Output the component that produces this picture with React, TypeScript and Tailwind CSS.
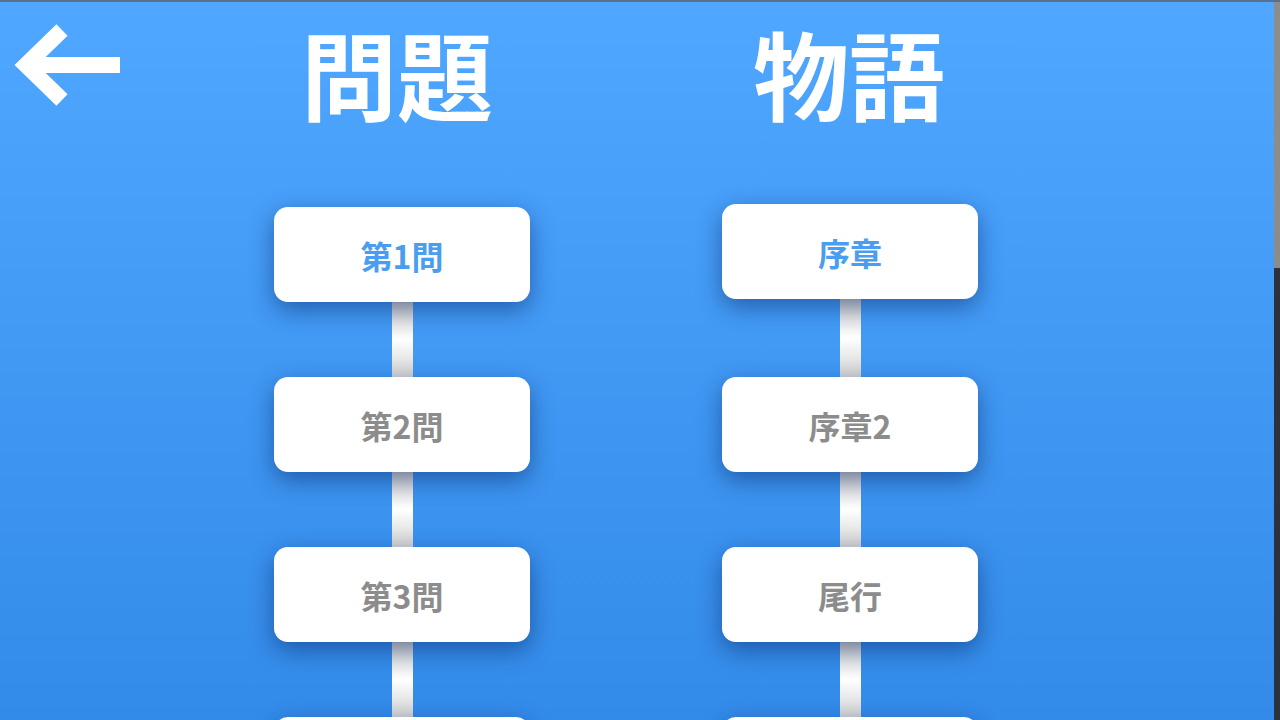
import React from "react";

const font = { fontFamily: '"Noto Sans CJK JP", "Noto Sans", sans-serif' };

function Card({ label, active }: { label: string; active?: boolean }) {
  return (
    <div
      className={`relative z-10 flex h-[95px] w-[256px] items-center justify-center rounded-[14px] bg-white text-[32px] font-bold shadow-[0_8px_24px_rgba(0,30,90,0.48)] ${
        active ? "text-[#4a9ef0]" : "text-[#8c8c8c]"
      }`}
    >
      <span className="leading-none pt-[1px]">{label}</span>
    </div>
  );
}

function Connector({ h = 75 }: { h?: number }) {
  return (
    <div
      className="w-[21px] bg-gradient-to-b from-[#cdcdcd] via-white to-[#d2d2d2]"
      style={{ height: h }}
    />
  );
}

function Column({
  title,
  items,
  top,
  firstGap,
  titleShift,
}: {
  title: string;
  items: string[];
  top: string;
  firstGap: number;
  titleShift: string;
}) {
  return (
    <div className="flex w-[256px] flex-col items-center">
      <div className="flex h-[0px] w-full justify-center">
        <h1 className={`mt-[22px] whitespace-nowrap text-[96px] font-bold leading-none text-white ${titleShift}`}>
          {title}
        </h1>
      </div>
      <div className={`flex flex-col items-center ${top}`}>
        {items.map((it, i) => (
          <React.Fragment key={it}>
            <Card label={it} active={i === 0} />
            <Connector h={i === 0 ? firstGap : 75} />
          </React.Fragment>
        ))}
        <Card label="" />
      </div>
    </div>
  );
}

export default function App() {
  return (
    <div
      className="relative h-[720px] w-full overflow-hidden border-t-2 border-[#5b6f8a] bg-gradient-to-b from-[#4fa7ff] to-[#338be9]"
      style={font}
    >
      <div className="absolute left-[12px] top-[18px]">
        <svg width="112" height="94" viewBox="0 0 112 94">
          <path
            d="M108 45 H22 M50 10 L14 45 L50 80"
            fill="none"
            stroke="white"
            strokeWidth="16"
            strokeLinecap="butt"
            strokeLinejoin="miter"
          />
        </svg>
      </div>
      <div className="flex gap-[192px] pl-[274px]">
        <Column
          title="問題"
          items={["第1問", "第2問", "第3問"]}
          top="mt-[205px]"
          firstGap={75}
          titleShift="-translate-x-[5px]"
        />
        <Column
          title="物語"
          items={["序章", "序章2", "尾行"]}
          top="mt-[202px]"
          firstGap={78}
          titleShift="-translate-x-[1px]"
        />
      </div>
      <div className="absolute right-0 top-0 flex h-full w-[6px] flex-col bg-[#2b323c]">
        <div className="h-[266px] w-full bg-[#8c8c8c]" />
      </div>
    </div>
  );
}
